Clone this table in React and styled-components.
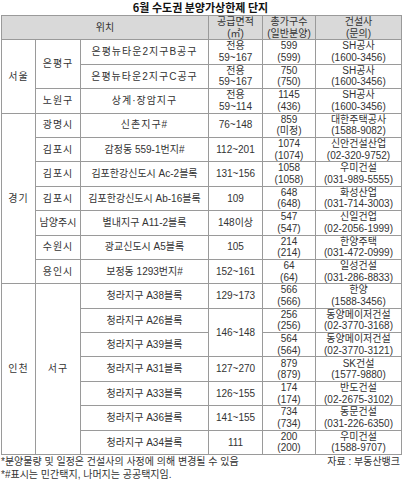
import React from "react";
import styled, { createGlobalStyle } from "styled-components";

const Global = createGlobalStyle`
  html, body { margin: 0; padding: 0; background: #fff; }
  body { font-family: "Liberation Sans", "Noto Sans CJK KR", sans-serif; color: #333; }
`;

const Page = styled.div`
  width: 407px;
  padding-left: 1px;
  box-sizing: border-box;
`;

const Title = styled.div`
  width: 399px;
  height: 15px;
  line-height: 14px;
  text-align: center;
  font-family: "Noto Sans CJK KR", sans-serif;
  font-size: 11px;
  font-weight: 700;
  color: #111;
`;

const Table = styled.table`
  width: 400px;
  border-collapse: collapse;
  table-layout: fixed;
  font-size: 10px;
  line-height: 11.6px;
`;

const Row = styled.tr`
  height: 24.4px;
`;

const Th = styled.th`
  background: #d9d9d9;
  font-weight: 400;
  border: 1px solid #9a9a9a;
  padding: 0;
  text-align: center;
  vertical-align: middle;
  color: #333;
`;

const Td = styled.td`
  border: 1px solid #9a9a9a;
  padding: 0;
  text-align: center;
  vertical-align: middle;
  white-space: nowrap;
  letter-spacing: ${(p) => (p.$wide ? "1px" : "0")};
`;

const Line = styled.span`
  display: block;
  height: 11.6px;
`;

const Footer = styled.div`
  width: 399px;
  font-size: 10px;
  line-height: 12.5px;
  margin-top: 1px;
  color: #333;
`;

const FootLine = styled.div`
  display: flex;
  justify-content: space-between;
`;

const Two = ({ a, b }) => (
  <>
    <Line>{a}</Line>
    <Line>{b}</Line>
  </>
);

export default function App() {
  return (
    <Page>
      <Global />
      <Title>6월 수도권 분양가상한제 단지</Title>
      <Table>
        <colgroup>
          <col style={{ width: 34 }} />
          <col style={{ width: 45 }} />
          <col style={{ width: 128 }} />
          <col style={{ width: 54 }} />
          <col style={{ width: 53 }} />
          <col style={{ width: 86 }} />
        </colgroup>
        <thead>
          <Row>
            <Th colSpan={3}>위치</Th>
            <Th><Two a="공급면적" b="(㎡)" /></Th>
            <Th><Two a="총가구수" b="(일반분양)" /></Th>
            <Th><Two a="건설사" b="(문의)" /></Th>
          </Row>
        </thead>
        <tbody>
          <Row>
            <Td rowSpan={3} $wide>서울</Td>
            <Td rowSpan={2} $wide>은평구</Td>
            <Td $wide>은평뉴타운2지구B공구</Td>
            <Td><Two a="전용" b="59~167" /></Td>
            <Td><Two a="599" b="(599)" /></Td>
            <Td><Two a="SH공사" b="(1600-3456)" /></Td>
          </Row>
          <Row>
            <Td $wide>은평뉴타운2지구C공구</Td>
            <Td><Two a="전용" b="59~167" /></Td>
            <Td><Two a="750" b="(750)" /></Td>
            <Td><Two a="SH공사" b="(1600-3456)" /></Td>
          </Row>
          <Row>
            <Td $wide>노원구</Td>
            <Td $wide>상계·장암지구</Td>
            <Td><Two a="전용" b="59~114" /></Td>
            <Td><Two a="1145" b="(436)" /></Td>
            <Td><Two a="SH공사" b="(1600-3456)" /></Td>
          </Row>
          <Row>
            <Td rowSpan={7} $wide>경기</Td>
            <Td $wide>광명시</Td>
            <Td $wide>신촌지구#</Td>
            <Td>76~148</Td>
            <Td><Two a="859" b="(미정)" /></Td>
            <Td><Two a="대한주택공사" b="(1588-9082)" /></Td>
          </Row>
          <Row>
            <Td $wide>김포시</Td>
            <Td>감정동 559-1번지#</Td>
            <Td>112~201</Td>
            <Td><Two a="1074" b="(1074)" /></Td>
            <Td><Two a="신안건설산업" b="(02-320-9752)" /></Td>
          </Row>
          <Row>
            <Td $wide>김포시</Td>
            <Td>김포한강신도시 Ac-2블록</Td>
            <Td>131~156</Td>
            <Td><Two a="1058" b="(1058)" /></Td>
            <Td><Two a="우미건설" b="(031-989-5555)" /></Td>
          </Row>
          <Row>
            <Td $wide>김포시</Td>
            <Td>김포한강신도시 Ab-16블록</Td>
            <Td>109</Td>
            <Td><Two a="648" b="(648)" /></Td>
            <Td><Two a="화성산업" b="(031-714-3003)" /></Td>
          </Row>
          <Row>
            <Td>남양주시</Td>
            <Td>별내지구 A11-2블록</Td>
            <Td>148이상</Td>
            <Td><Two a="547" b="(547)" /></Td>
            <Td><Two a="신일건업" b="(02-2056-1999)" /></Td>
          </Row>
          <Row>
            <Td $wide>수원시</Td>
            <Td>광교신도시 A5블록</Td>
            <Td>105</Td>
            <Td><Two a="214" b="(214)" /></Td>
            <Td><Two a="한양주택" b="(031-472-0999)" /></Td>
          </Row>
          <Row>
            <Td $wide>용인시</Td>
            <Td>보정동 1293번지#</Td>
            <Td>152~161</Td>
            <Td><Two a="64" b="(64)" /></Td>
            <Td><Two a="일성건설" b="(031-286-8833)" /></Td>
          </Row>
          <Row>
            <Td rowSpan={7} $wide>인천</Td>
            <Td rowSpan={7} $wide>서구</Td>
            <Td>청라지구 A38블록</Td>
            <Td>129~173</Td>
            <Td><Two a="566" b="(566)" /></Td>
            <Td><Two a="한양" b="(1588-3456)" /></Td>
          </Row>
          <Row>
            <Td>청라지구 A26블록</Td>
            <Td rowSpan={2}>146~148</Td>
            <Td><Two a="256" b="(256)" /></Td>
            <Td><Two a="동양메이저건설" b="(02-3770-3168)" /></Td>
          </Row>
          <Row>
            <Td>청라지구 A39블록</Td>
            <Td><Two a="564" b="(564)" /></Td>
            <Td><Two a="동양메이저건설" b="(02-3770-3121)" /></Td>
          </Row>
          <Row>
            <Td>청라지구 A31블록</Td>
            <Td>127~270</Td>
            <Td><Two a="879" b="(879)" /></Td>
            <Td><Two a="SK건설" b="(1577-9880)" /></Td>
          </Row>
          <Row>
            <Td>청라지구 A33블록</Td>
            <Td>126~155</Td>
            <Td><Two a="174" b="(174)" /></Td>
            <Td><Two a="반도건설" b="(02-2675-3102)" /></Td>
          </Row>
          <Row>
            <Td>청라지구 A36블록</Td>
            <Td>141~155</Td>
            <Td><Two a="734" b="(734)" /></Td>
            <Td><Two a="동문건설" b="(031-226-6350)" /></Td>
          </Row>
          <Row>
            <Td>청라지구 A34블록</Td>
            <Td>111</Td>
            <Td><Two a="200" b="(200)" /></Td>
            <Td><Two a="우미건설" b="(1588-9707)" /></Td>
          </Row>
        </tbody>
      </Table>
      <Footer>
        <FootLine>
          <span>*분양물량 및 일정은 건설사의 사정에 의해 변경될 수 있음</span>
          <span>자료 : 부동산뱅크</span>
        </FootLine>
        <FootLine>
          <span>*#표시는 민간택지, 나머지는 공공택지임.</span>
        </FootLine>
      </Footer>
    </Page>
  );
}
